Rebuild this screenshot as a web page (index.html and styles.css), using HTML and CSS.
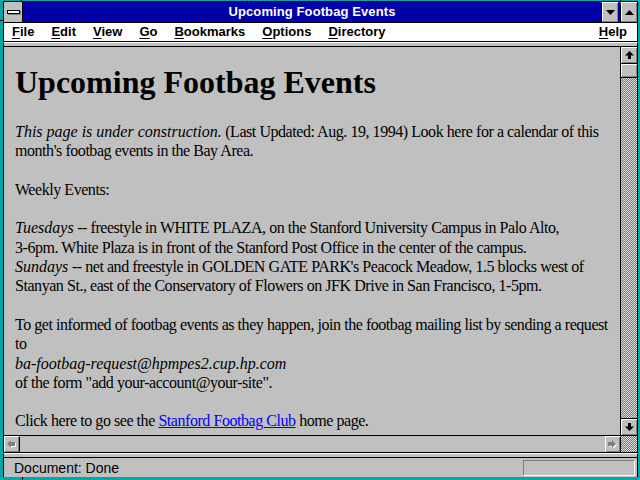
FILE: index.html
```html
<!DOCTYPE html>
<html>
<head>
<meta charset="utf-8">
<title>Upcoming Footbag Events</title>
<link rel="stylesheet" href="styles.css">
</head>
<body>
<div class="window">
  <span class="tick tick-tl-h"></span>
  <span class="tick tick-tl-v"></span>
  <span class="tick tick-tr-h"></span>
  <span class="tick tick-bl-h"></span>
  <div class="titlebar">
    <div class="sysmenu"><span class="sysbar"></span></div>
    <div class="title">Upcoming Footbag Events</div>
    <div class="tbtn">
      <svg width="9" height="5" viewBox="0 0 9 5"><polygon points="0,0 9,0 4.5,5" fill="#000"/></svg>
    </div>
    <div class="tbtn">
      <svg width="9" height="5" viewBox="0 0 9 5"><polygon points="0,5 9,5 4.5,0" fill="#000"/></svg>
    </div>
  </div>
  <div class="menubar">
    <span class="mi"><u>F</u>ile</span>
    <span class="mi"><u>E</u>dit</span>
    <span class="mi"><u>V</u>iew</span>
    <span class="mi"><u>G</u>o</span>
    <span class="mi"><u>B</u>ookmarks</span>
    <span class="mi"><u>O</u>ptions</span>
    <span class="mi"><u>D</u>irectory</span>
    <span class="mi help"><u>H</u>elp</span>
  </div>
  <div class="toolbar"></div>
  <div class="main">
    <div class="content">
      <h1>Upcoming Footbag Events</h1>
      <p><i>This page is under construction.</i> (Last Updated: Aug. 19, 1994) Look here for a calendar of this<br>month's footbag events in the Bay Area.</p>
      <p>Weekly Events:</p>
      <p><i>Tuesdays</i> -- freestyle in WHITE PLAZA, on the Stanford University Campus in Palo Alto,<br>3-6pm. White Plaza is in front of the Stanford Post Office in the center of the campus.<br><i>Sundays</i> -- net and freestyle in GOLDEN GATE PARK's Peacock Meadow, 1.5 blocks west of<br>Stanyan St., east of the Conservatory of Flowers on JFK Drive in San Francisco, 1-5pm.</p>
      <p>To get informed of footbag events as they happen, join the footbag mailing list by sending a request<br>to<br><i>ba-footbag-request@hpmpes2.cup.hp.com</i><br>of the form "add your-account@your-site".</p>
      <p>Click here to go see the <a href="#">Stanford Footbag Club</a> home page.</p>
    </div>
    <div class="vscroll">
      <div class="sbtn">
        <svg width="9" height="9" viewBox="0 0 9 9"><polygon points="4.5,0 9,4.5 6,4.5 6,8 3,8 3,4.5 0,4.5" fill="#000"/></svg>
      </div>
      <div class="thumb"></div>
      <div class="track">
        <svg class="dither" width="16" height="400"><defs><pattern id="dv" width="2" height="2" patternUnits="userSpaceOnUse"><rect width="2" height="2" fill="#e0e0e0"/><rect width="1" height="1" fill="#00a8a8"/><rect x="1" y="1" width="1" height="1" fill="#00a8a8"/></pattern></defs><rect width="16" height="400" fill="url(#dv)"/></svg>
      </div>
      <div class="sbtn">
        <svg width="9" height="9" viewBox="0 0 9 9"><polygon points="4.5,8 9,3.5 6,3.5 6,0 3,0 3,3.5 0,3.5" fill="#000"/></svg>
      </div>
    </div>
  </div>
  <div class="hscroll">
    <div class="sbtn h">
      <svg width="10" height="10" viewBox="0 0 10 10"><polygon points="1,5 5,1 5,3 9,3 9,7 5,7 5,9" fill="#fff"/><polygon points="0,4 4,0 4,2 8,2 8,6 4,6 4,8" fill="#808080"/></svg>
    </div>
    <div class="htrack"></div>
    <div class="sbtn h">
      <svg width="10" height="10" viewBox="0 0 10 10"><polygon points="9,5 5,1 5,3 1,3 1,7 5,7 5,9" fill="#fff"/><polygon points="8,4 4,0 4,2 0,2 0,6 4,6 4,8" fill="#808080"/></svg>
    </div>
    <div class="corner">
      <svg class="dither" width="16" height="16"><rect width="16" height="16" fill="url(#dv)"/></svg>
    </div>
  </div>
  <div class="sep"></div>
  <div class="status">
    <span class="stext">Document: Done</span>
    <span class="sfield"></span>
  </div>
</div>
</body>
</html>
```
FILE: styles.css
```css
html, body {
  margin: 0;
  padding: 0;
  width: 640px;
  height: 480px;
  overflow: hidden;
  background: #00a8a8;
}
.window {
  position: relative;
  box-sizing: border-box;
  width: 640px;
  height: 480px;
  border-style: solid;
  border-color: #00a8a8;
  border-width: 1px 2px 3px 3px;
  display: flex;
  flex-direction: column;
  font-family: "Liberation Sans", Arial, sans-serif;
}
.window > .titlebar,
.window > .menubar,
.window > .toolbar,
.window > .main,
.window > .hscroll,
.window > .sep,
.window > .status {
  border-left: 1px solid #000;
  border-right: 1px solid #000;
  flex: none;
}
.window > .main { flex: 1 1 auto; }
.tick {
  position: absolute;
  background: #000;
}
.tick-tl-h { left: 18px; top: -1px; width: 1px; height: 2px; }
.tick-tl-v { left: -3px; top: 19px; width: 3px; height: 1px; }
.tick-tr-h { right: 17px; top: -1px; width: 1px; height: 2px; }
.tick-bl-h { left: 19px; bottom: -3px; width: 1px; height: 3px; }

.titlebar {
  display: flex;
  height: 20px;
  border-top: 1px solid #000;
  border-bottom: 1px solid #000;
  background: #0000a8;
}
.sysmenu {
  width: 18px;
  background: #c0c0c0;
  border-right: 1px solid #000;
  display: flex;
  align-items: center;
  justify-content: center;
}
.sysbar {
  display: block;
  width: 11px;
  height: 2px;
  background: #fff;
  border: 1px solid #000;
  box-shadow: 1px 1px 0 #808080;
}
.title {
  flex: 1;
  color: #fff;
  font-weight: bold;
  font-size: 13px;
  text-align: center;
  line-height: 20px;
  letter-spacing: 0.1px;
}
.tbtn {
  width: 17px;
  box-sizing: border-box;
  background: #c0c0c0;
  border-left: 1px solid #000;
  border-top: 1px solid #fff;
  box-shadow: inset -1px -1px 0 #808080, inset 1px 0 0 #fff;
  display: flex;
  align-items: center;
  justify-content: center;
}
.tbtn + .tbtn { margin-left: 2px; }

.menubar {
  display: flex;
  height: 18px;
  background: #fff;
  border-bottom: 1px solid #000;
  font-size: 13px;
  font-weight: bold;
  line-height: 18px;
  padding-left: 8px;
  gap: 17px;
}
.mi u { text-decoration-thickness: 1px; text-underline-offset: 2px; }
.help { margin-left: auto; margin-right: 10px; }

.toolbar {
  height: 3px;
  background: #c0c0c0;
  border-top: 1px solid #fff;
  border-bottom: 1px solid #000;
}

.main {
  display: flex;
  min-height: 0;
  border-bottom: 1px solid #000;
}
.content {
  flex: 1;
  background: #c0c0c0;
  padding: 17px 12px 0 11px;
  font-family: "Liberation Serif", "Times New Roman", serif;
  font-size: 16px;
  line-height: 19.3px;
  color: #000;
  overflow: hidden;
}
.content h1 {
  font-size: 32px;
  line-height: 36px;
  margin: 0 0 22px 0;
  font-weight: bold;
}
.content p {
  margin: 0 0 19.3px 0;
  white-space: nowrap;
  letter-spacing: -0.45px;
}
.content p i { letter-spacing: 0; }
.content a { color: #0000ff; text-decoration: underline; }

.vscroll {
  width: 16px;
  border-left: 1px solid #000;
  display: flex;
  flex-direction: column;
}
.sbtn {
  width: 16px;
  height: 16px;
  box-sizing: border-box;
  background: #c0c0c0;
  border-top: 1px solid #fff;
  border-left: 1px solid #fff;
  box-shadow: inset -1px -1px 0 #808080;
  display: flex;
  align-items: center;
  justify-content: center;
  flex: none;
}
.thumb {
  height: 15px;
  box-sizing: border-box;
  border-top: 1px solid #000;
  border-bottom: 1px solid #000;
  background: #c0c0c0;
  box-shadow: inset 1px 1px 0 #fff, inset -1px -1px 0 #808080;
  flex: none;
}
.track {
  flex: 1;
  overflow: hidden;
  min-height: 0;
  border-bottom: 1px solid #000;
}
.dither { display: block; }

.hscroll {
  height: 16px;
  display: flex;
  border-bottom: 1px solid #000;
}
.sbtn.h { border-right: 1px solid #000; }
.htrack { flex: 1; background: #c0c0c0; }
.corner { width: 16px; overflow: hidden; }

.sep {
  height: 3px;
  background: #c0c0c0;
  border-top: 1px solid #fff;
  border-bottom: 1px solid #000;
}
.status {
  height: 19px;
  display: flex;
  align-items: center;
  background: #c0c0c0;
  padding: 0 2px 0 10px;
}
.stext {
  flex: 1;
  font-size: 14px;
  color: #000;
}
.sfield {
  width: 112px;
  height: 16px;
  box-sizing: border-box;
  border-top: 1px solid #808080;
  border-left: 1px solid #808080;
  border-bottom: 1px solid #fff;
  border-right: 1px solid #fff;
}
```
